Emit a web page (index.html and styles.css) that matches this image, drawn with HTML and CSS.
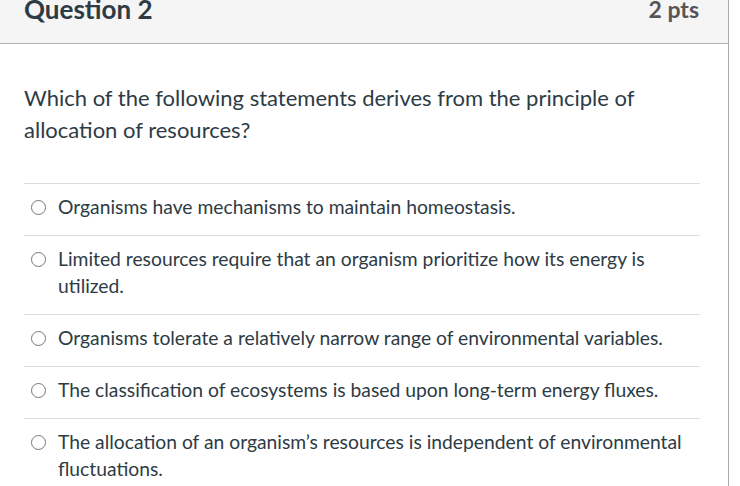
FILE: index.html
```html
<!DOCTYPE html>
<html lang="en">
<head>
<meta charset="utf-8">
<title>Question 2</title>
<link rel="stylesheet" href="styles.css">
</head>
<body>
<div class="question">
  <div class="header">
    <span class="title">Question 2</span>
    <span class="points">2 pts</span>
  </div>
  <div class="content">
    <p class="text">Which of the following statements derives from the principle of allocation of resources?</p>
    <div class="answers">
      <label class="answer"><span class="radio"></span><span class="label">Organisms have mechanisms to maintain homeostasis.</span></label>
      <label class="answer"><span class="radio"></span><span class="label">Limited resources require that an organism prioritize how its energy is utilized.</span></label>
      <label class="answer"><span class="radio"></span><span class="label">Organisms tolerate a relatively narrow range of environmental variables.</span></label>
      <label class="answer"><span class="radio"></span><span class="label">The classification of ecosystems is based upon long-term energy fluxes.</span></label>
      <label class="answer"><span class="radio"></span><span class="label">The allocation of an organism’s resources is independent of environmental fluctuations.</span></label>
    </div>
  </div>
</div>
</body>
</html>
```

FILE: styles.css
```css
html, body {
  margin: 0;
  padding: 0;
  background: #ffffff;
}
body {
  font-family: Lato, "Noto Sans", sans-serif;
  color: #2d3b45;
  overflow: hidden;
}
.question {
  width: 728px;
  height: 486px;
  border-right: 1px solid #a9a9a9;
  box-sizing: content-box;
}
.header {
  height: 43px;
  background: #f5f5f5;
  border-bottom: 1px solid #b0b0b0;
  display: flex;
  justify-content: space-between;
  align-items: flex-start;
  padding: 0 29px 0 24px;
}
.title {
  font-weight: 700;
  font-size: 26px;
  line-height: 19px;
  color: #2d3b45;
}
.points {
  font-weight: 700;
  font-size: 23px;
  line-height: 19px;
  color: #555555;
}
.content {
  padding: 0 28px 0 24px;
}
.text {
  margin: 0;
  padding: 37.5px 0 37.5px;
  font-size: 22px;
  line-height: 32px;
}
.answer {
  display: flex;
  align-items: flex-start;
  gap: 12px;
  border-top: 1px solid #dcdcdc;
  padding: 9px 0 15px 7px;
  font-size: 19.3px;
  line-height: 27px;
}
.radio {
  flex: none;
  width: 15px;
  height: 15px;
  box-sizing: border-box;
  border: 1.5px solid #777777;
  border-radius: 50%;
  margin-top: 7px;
  background: #ffffff;
}
```
